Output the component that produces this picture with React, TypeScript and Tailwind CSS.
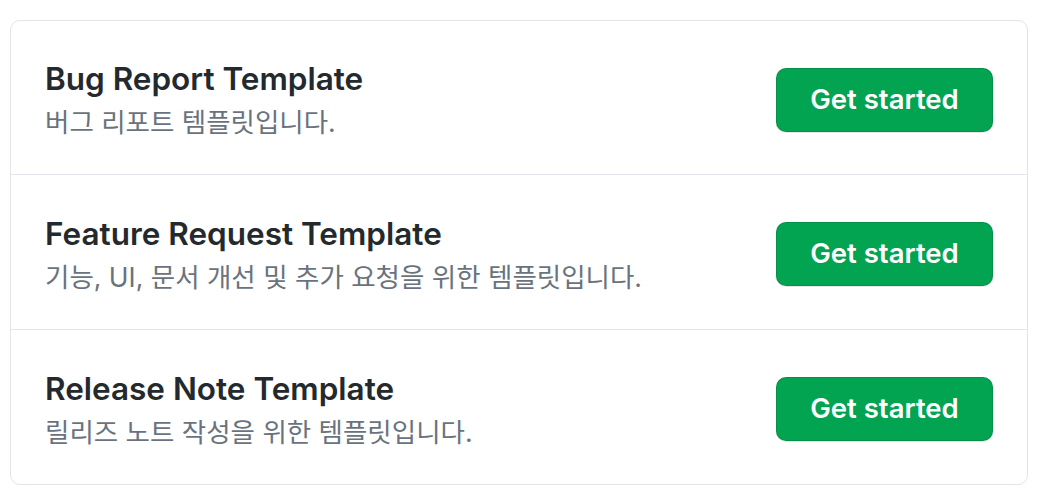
import React from 'react';

interface Template {
  title: string;
  description: string;
}

const templates: Template[] = [
  { title: 'Bug Report Template', description: '버그 리포트 템플릿입니다.' },
  { title: 'Feature Request Template', description: '기능, UI, 문서 개선 및 추가 요청을 위한 템플릿입니다.' },
  { title: 'Release Note Template', description: '릴리즈 노트 작성을 위한 템플릿입니다.' },
];

const font = { fontFamily: 'Inter, "Noto Sans CJK KR", sans-serif' };

export default function App() {
  return (
    <div className="min-h-screen bg-white pt-5 px-[10px]" style={font}>
      <div className="w-[1018px] rounded-[10px] border border-[#e1e4e8] bg-white">
        {templates.map((t, i) => (
          <div
            key={t.title}
            className={`flex items-center justify-between px-[34px] ${
              i > 0 ? 'h-[155px] border-t border-[#e1e4e8]' : 'h-[153px]'
            }`}
          >
            <div className="mt-[4px] flex flex-col gap-[5px]">
              <h3 className="text-[31.5px] font-semibold leading-[40px] text-[#24292e]">{t.title}</h3>
              <p className="text-[26.5px] leading-[36px] text-[#6a737d]">{t.description}</p>
            </div>
            <button className="mt-[4px] h-[64px] w-[217px] rounded-[10px] border border-[#1b1f2326] bg-[#02a452] text-[27.5px] font-semibold text-white shadow-[0_1px_0_rgba(27,31,35,0.1)]">
              Get started
            </button>
          </div>
        ))}
      </div>
    </div>
  );
}
